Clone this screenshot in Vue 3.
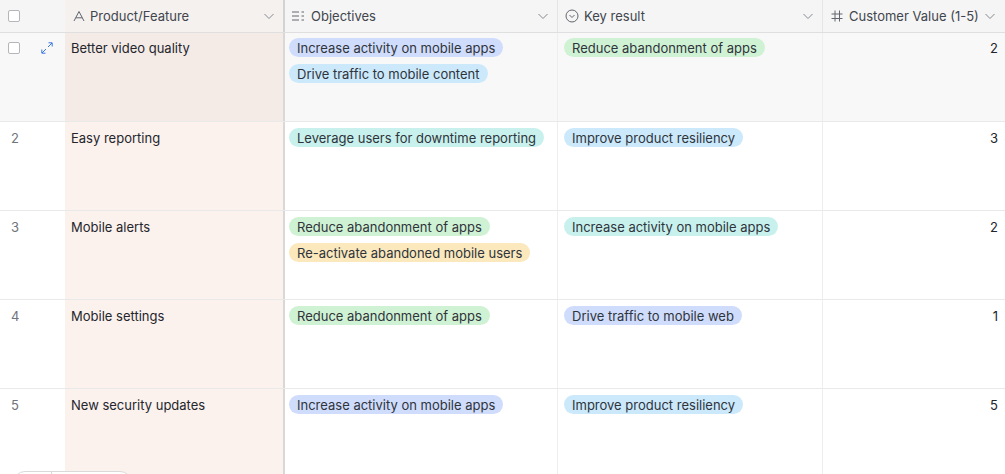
<script setup>
const rows = [
  { id: 1, name: 'Better video quality', obj: [['Increase activity on mobile apps', 'indigo'], ['Drive traffic to mobile content', 'blue']], kr: [['Reduce abandonment of apps', 'green']], val: 2, active: true },
  { id: 2, name: 'Easy reporting', obj: [['Leverage users for downtime reporting', 'teal']], kr: [['Improve product resiliency', 'blue']], val: 3 },
  { id: 3, name: 'Mobile alerts', obj: [['Reduce abandonment of apps', 'green'], ['Re-activate abandoned mobile users', 'yellow']], kr: [['Increase activity on mobile apps', 'teal']], val: 2 },
  { id: 4, name: 'Mobile settings', obj: [['Reduce abandonment of apps', 'green']], kr: [['Drive traffic to mobile web', 'indigo']], val: 1 },
  { id: 5, name: 'New security updates', obj: [['Increase activity on mobile apps', 'indigo']], kr: [['Improve product resiliency', 'blue']], val: 5 },
]
</script>

<template>
  <div class="table">
    <div class="row head">
      <div class="c lead"><span class="check"></span></div>
      <div class="c primary">
        <svg class="ic" width="14" height="14" viewBox="0 0 14 14"><path d="M2 12 7 2.500 12 12M3.800 8.800h6.400" /></svg>
        <span class="title">Product/Feature</span>
        <svg class="chev" width="12" height="12" viewBox="0 0 12 12"><path d="M1.500 4 6 8.500 10.500 4" /></svg>
      </div>
      <div class="c obj">
        <svg class="ic" width="14" height="14" viewBox="0 0 14 14"><path d="M1 3h7M1 7h7M1 11h7M10.500 3h2.500M10.500 7h2.500M10.500 11h2.500" /></svg>
        <span class="title">Objectives</span>
        <svg class="chev" width="12" height="12" viewBox="0 0 12 12"><path d="M1.500 4 6 8.500 10.500 4" /></svg>
      </div>
      <div class="c kr">
        <svg class="ic" width="14" height="14" viewBox="0 0 14 14"><circle cx="7" cy="7" r="6" /><path d="M4.500 6 7 8.500 9.500 6" /></svg>
        <span class="title">Key result</span>
        <svg class="chev" width="12" height="12" viewBox="0 0 12 12"><path d="M1.500 4 6 8.500 10.500 4" /></svg>
      </div>
      <div class="c val">
        <svg class="ic" width="14" height="14" viewBox="0 0 14 14"><path d="M5 1.500v11M9.500 1.500v11M1.500 5h11M1.500 9.500h11" /></svg>
        <span class="title">Customer Value (1-5)</span>
        <svg class="chev" width="12" height="12" viewBox="0 0 12 12"><path d="M1.500 4 6 8.500 10.500 4" /></svg>
      </div>
    </div>

    <div v-for="r in rows" :key="r.id" class="row body" :class="{ active: r.active }">
      <div class="c lead">
        <template v-if="r.active">
          <span class="check"></span>
          <svg class="expand" width="14" height="14" viewBox="0 0 14 14"><path d="M8 6 12 2M8.500 1.800H12.200V5.500M6 8 2 12M1.800 8.500V12.200H5.500" /></svg>
        </template>
        <span v-else class="num">{{ r.id }}</span>
      </div>
      <div class="c primary">{{ r.name }}</div>
      <div class="c obj pills">
        <span v-for="p in r.obj" :key="p[0]" class="pill" :class="p[1]">{{ p[0] }}</span>
      </div>
      <div class="c kr pills">
        <span v-for="p in r.kr" :key="p[0]" class="pill" :class="p[1]">{{ p[0] }}</span>
      </div>
      <div class="c val num-val">{{ r.val }}</div>
    </div>

    <div class="pager"><span></span></div>
  </div>
</template>

<style>
html, body { margin: 0; background: #fff; overflow: hidden; }
</style>

<style scoped>
.table {
  position: relative;
  width: 1005px;
  height: 474px;
  overflow: hidden;
  font-family: Inter, "Liberation Sans", sans-serif;
  font-size: 13px;
  color: #24262c;
}
.row {
  display: grid;
  grid-template-columns: 65px 220px 273px 265px 182px;
}
.c { box-sizing: border-box; min-width: 0; }
.head { height: 32px; background: #f5f5f5; border-bottom: 1px solid #dfdfdf; box-sizing: content-box; }
.head .c {
  display: flex;
  align-items: center;
  height: 32px;
  border-right: 1px solid #e5e5e5;
  padding: 0 8px 0 7px;
  color: #41454d;
}
.head .primary { background: #f4f1ef; border-right: 2px solid #d3d3d3; }
.head .primary .title { margin-left: 4px; }
.head .lead { background: #f5f5f5; border-right: 0; padding-left: 8px; }
.head .obj { padding-left: 6px; }
.head .obj .title { margin-left: 6px; }
.head .val { padding: 0 9px 0 7px; border-right: 0; }
.title { margin-left: 5px; flex: 1; white-space: nowrap; }
.ic { flex: none; fill: none; stroke: #62666e; stroke-width: 1; }
.chev { flex: none; fill: none; stroke: #858a91; stroke-width: 1; }
.check {
  display: block;
  width: 10px;
  height: 10px;
  border: 1px solid #b4b6bb;
  border-radius: 2px;
  background: #fff;
}
.body { height: 89px; border-bottom: 1px solid #e9e9e9; box-sizing: border-box; }
.body .c { padding: 7px 6px 0 6px; border-right: 1px solid #eeeeee; line-height: 18px; }
.body .lead { display: flex; align-items: flex-start; border-right: 0; padding: 7px 0 0 11px; position: relative; }
.body .primary { background: #fbf1ed; border-right: 2px solid #d8d8d8; }
.active { background: #f8f8f8; }
.active .c { padding-top: 6px; }
.body.active .primary { background: #f4ebe7; }
.body.active .lead { padding: 9px 0 0 8px; }
.expand { margin-left: 20px; margin-top: -1px; fill: none; stroke: #3b76dc; stroke-width: 1; }
.num { color: #70747b; }
.pills { display: flex; flex-direction: column; align-items: flex-start; gap: 7px; }
.body .pills { padding-top: 6px; }
.body.active .pills { padding-top: 5px; }
.body .obj { padding-left: 4px; }
.pill {
  display: block;
  box-sizing: border-box;
  height: 19px;
  line-height: 18px;
  padding: 1px 8px 0;
  border-radius: 10px;
  white-space: nowrap;
  color: #2f343b;
}
.indigo { background: #d0dcfb; }
.blue { background: #cbe9fb; }
.green { background: #d0f2d4; }
.teal { background: #c8f1ed; }
.yellow { background: #fbe8bd; }
.body .num-val { text-align: right; border-right: 0; padding-right: 7px; }
.pager {
  position: absolute;
  left: 13px;
  top: 471px;
  width: 119px;
  height: 30px;
  box-sizing: border-box;
  border: 1px solid #d9d9d9;
  border-radius: 12px;
  background: #fff;
}
.pager span {
  position: absolute;
  left: 37px;
  top: 0;
  bottom: 0;
  width: 1px;
  background: #d9d9d9;
}
</style>
